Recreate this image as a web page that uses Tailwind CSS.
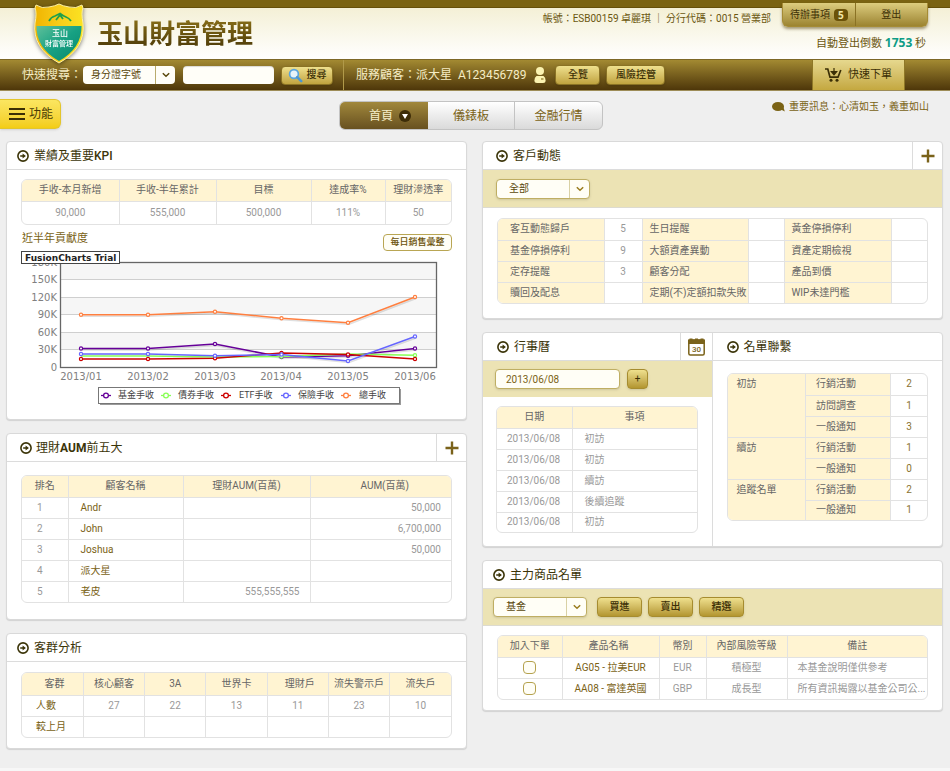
<!DOCTYPE html>
<html lang="zh-Hant">
<head>
<meta charset="utf-8">
<meta name="viewport" content="width=device-width, initial-scale=1">
<title>玉山財富管理</title>
<script src="https://cdn.jsdelivr.net/npm/@tailwindcss/browser@4"></script>
</head>
<body class="bg-[#f7f7f7] font-['Roboto','Noto_Sans_CJK_TC',sans-serif] text-[10px] leading-4 text-[#666]">

<svg class="hidden" aria-hidden="true">
  <symbol id="go" viewBox="0 0 12 12">
    <circle cx="6" cy="6" r="5.1" fill="none" stroke="#3b3408" stroke-width="1.6"/>
    <path d="M3.2 5.3H5.6V3.6L8.9 6L5.6 8.4V6.7H3.2Z" fill="#3b3408"/>
  </symbol>
  <symbol id="plus" viewBox="0 0 14 14">
    <path d="M7 0.5V13.5M0.5 7H13.5" stroke="#7a621a" stroke-width="2.4" fill="none"/>
  </symbol>
  <symbol id="chev" viewBox="0 0 8 6">
    <path d="M0.8 1.2L4 4.3L7.2 1.2" stroke="currentColor" stroke-width="1.5" fill="none"/>
  </symbol>
</svg>

<header class="relative">
  <div class="h-2 border-b border-[#655009] bg-[#7a6312]"></div>
  <div class="flex h-[51px] items-center bg-linear-to-b from-[#f4f0d6] to-white pl-[97px]">
    <h1 class="bg-linear-to-b from-[#8a7018] to-[#4a3808] bg-clip-text text-[26px] leading-8 font-bold text-transparent">玉山財富管理</h1>
    <div class="ml-auto flex self-stretch">
      <p class="mr-[11px] pt-[3px] text-[#6b5710]">帳號：ESB00159 卓麗琪 ｜ 分行代碼：0015 營業部</p>
      <div class="mr-6 flex w-[144px] items-end justify-end pb-[7px] text-[11px] text-[#6b5710]">
        <p>自動登出倒數 <b class="font-['Open_Sans'] text-xs leading-4 text-[#0d9c86]">1753</b> 秒</p>
      </div>
    </div>
  </div>

  <div class="absolute top-[3px] right-[22px] flex h-6 w-[146px] rounded-b-md border border-t-0 border-[#a58b35] bg-linear-to-b from-[#ddcd7e] to-[#9c8430] text-[#3b2f05] shadow-[0_2px_3px_rgba(80,60,0,0.5)]">
    <a href="#" class="flex flex-1 items-center justify-center gap-1 border-r border-[#8a7224]">待辦事項<span class="rounded bg-[#6b5208] px-1 font-['Open_Sans'] text-[10px] leading-3 font-bold text-[#f3e7a8]">5</span></a>
    <a href="#" class="flex flex-1 items-center justify-center">登出</a>
  </div>

  <svg class="absolute top-[3px] left-[33px] drop-shadow-[0_1px_2px_rgba(0,0,0,0.5)]" width="52" height="61" viewBox="0 0 52 61" role="img" aria-label="玉山財富管理">
    <defs>
      <linearGradient id="gold" x1="0" x2="1" y1="0" y2="0"><stop offset="0" stop-color="#f0b400"/><stop offset=".55" stop-color="#f8cf1c"/><stop offset="1" stop-color="#fbe321"/></linearGradient>
      <linearGradient id="jade" x1="0" x2="1" y1="0" y2="1"><stop offset="0" stop-color="#5ec09a"/><stop offset=".5" stop-color="#17a183"/><stop offset="1" stop-color="#07866b"/></linearGradient>
    </defs>
    <path d="M3 2Q9 6 16 4Q22 3 26 1Q30 3 36 4Q43 6 49 2L50 5Q48 10 50 20Q53 45 26 60Q-1 45 2 20Q4 10 2 5Z" fill="url(#gold)" stroke="#fdf0a0" stroke-width="1"/>
    <path d="M3.500 23H48.500Q49 45 26 58Q3 45 3.500 23Z" fill="url(#jade)"/>
    <path d="M16 18Q18 14 22 13L27 10.500Q30 13 33 14Q36 15 38 18M23 17L27 12L30 16" fill="none" stroke="#1fa04a" stroke-width="1.800"/>
    <text x="27" y="33" text-anchor="middle" font-size="8" font-weight="500" fill="#fff" font-family="Noto Sans CJK TC, sans-serif">玉山</text>
    <text x="26" y="43" text-anchor="middle" font-size="7" font-weight="500" fill="#fff" font-family="Noto Sans CJK TC, sans-serif">財富管理</text>
  </svg>

  <div class="flex h-8 items-center border-y border-t-[#7d6828] border-b-[#9d8c58] bg-linear-to-b from-[#a38a32] to-[#4e370a] pl-[22px] text-[#f5ecc4]">
    <label for="idtype" class="w-[61px] text-[12px] whitespace-nowrap">快速搜尋：</label>
    <div class="relative w-[92px]">
      <select id="idtype" class="block h-[18px] w-full appearance-none rounded border-0 bg-[#fffef8] pl-2 text-[10px] leading-[18px] text-[#5a480c]"><option>身分證字號</option></select>
      <span class="pointer-events-none absolute inset-y-0 right-0 flex w-5 items-center justify-center border-l border-[#b9ab6d] text-[#5a480c]"><svg class="h-1.5 w-2"><use href="#chev"/></svg></span>
    </div>
    <input type="text" aria-label="快速搜尋" class="ml-2 h-[18px] w-[91px] rounded bg-[#fffef8] px-2 text-[#5a480c] shadow-[inset_0_1px_1px_rgba(0,0,0,0.15)]">
    <button class="ml-[7px] flex h-[19px] w-[52px] items-center justify-center gap-1 rounded border border-[#8a7224] bg-linear-to-b from-[#efe08d] to-[#c0a33e] font-medium text-[#3b2f05] shadow-sm">
      <svg width="15" height="15" viewBox="0 0 15 15"><circle cx="6" cy="6" r="4.400" fill="#e6f3f8" stroke="#58a4df" stroke-width="1.700"/><path d="M9.200 9.200L13.200 13.200" stroke="#4c97d3" stroke-width="2.600" stroke-linecap="round"/></svg>搜尋</button>
    <div class="ml-2.5 h-full border-l border-[#b19a4a] pl-3"></div>
    <p class="text-[12px] whitespace-pre">服務顧客：派大星  A123456789</p>
    <svg class="ml-2 shrink-0" width="12" height="18" viewBox="0 0 12 18"><circle cx="6" cy="5" r="4" fill="#fbf3b0"/><path d="M2.500 10H9.500Q11.600 11 11.600 14.500Q11.600 17 9 17H3Q0.400 17 0.400 14.500Q0.400 11 2.500 10Z" fill="#fbf3b0"/><path d="M7 13H9.500" stroke="#8a7224" stroke-width="1.200"/></svg>
    <button class="ml-[9px] h-5 w-[45px] rounded border border-[#8a7224] bg-linear-to-b from-[#efe08d] to-[#c0a33e] font-medium text-[#3b2f05] shadow-sm">全覽</button>
    <button class="ml-1.5 h-5 w-[59px] rounded border border-[#8a7224] bg-linear-to-b from-[#efe08d] to-[#c0a33e] font-medium text-[#3b2f05] shadow-sm">風險控管</button>
    <a href="#" class="mr-[45px] ml-auto flex h-full w-[93px] items-center justify-center gap-1.5 border-x border-[#8f7827] bg-linear-to-b from-[#e6d88e] to-[#c4a83f] text-[11px] text-[#3b2f05]">
      <svg width="17" height="14" viewBox="0 0 17 14"><path d="M0 1H2.800L5 9.200H13L15.800 2" fill="none" stroke="#3b2f05" stroke-width="1.700"/><path d="M9 0V4M6.300 3.500H11.700L9 6.800Z" fill="#3b2f05" stroke="#3b2f05" stroke-width="1.200"/><circle cx="6" cy="12.300" r="1.500" fill="#3b2f05"/><circle cx="12" cy="12.300" r="1.500" fill="#3b2f05"/></svg>快速下單</a>
  </div>
</header>

<main class="bg-[#efefef] pb-[19px]">
  <div class="grid h-[50px] grid-cols-[1fr_auto_1fr] items-start pr-2">
    <button class="mt-2 flex h-[30px] w-[61px] items-center gap-1 rounded-r-md border border-l-0 border-[#e3c52c] bg-linear-to-b from-[#fbe660] to-[#f3cd12] pl-[9px] text-[12px] text-[#4a3b05] shadow">
      <svg width="16" height="14" viewBox="0 0 16 14"><path d="M0 2H16M0 7H16M0 12H16" stroke="#3b2f05" stroke-width="2"/></svg>功能</button>
    <nav class="mt-[10px] flex h-[29px] overflow-hidden rounded-md border border-[#c3c3c3] bg-linear-to-b from-white to-[#dadada] text-[12px] text-[#7a6215]">
      <a href="#" class="flex w-[88px] items-center justify-center gap-1.5 bg-linear-to-b from-[#a1883c] to-[#685120] pl-3 text-[#f6eec9]">首頁<svg width="12" height="12" viewBox="0 0 12 12"><circle cx="6" cy="6" r="6" fill="#3d2d08"/><path d="M3 4H9L6 9Z" fill="#fff"/></svg></a>
      <a href="#" class="flex w-[87px] items-center justify-center border-r border-[#c3c3c3]">儀錶板</a>
      <a href="#" class="flex w-[87px] items-center justify-center">金融行情</a>
    </nav>
    <p class="mt-2 mr-[13px] flex items-center gap-1 justify-self-end text-[#7a6215]">
      <svg width="13" height="10" viewBox="0 0 13 10"><ellipse cx="6" cy="4.500" rx="6" ry="4.500" fill="#7a6215"/><path d="M8 7L12.800 9.600L11 4Z" fill="#7a6215"/></svg>重要訊息：心清如玉，義重如山</p>
  </div>

  <div class="grid grid-cols-2 items-start gap-[15px] pr-[7px] pl-1.5">
    <div class="flex min-w-0 flex-col gap-[13px]">

      <section class="rounded border border-[#d9d9d9] bg-white shadow-[0_1px_1px_rgba(0,0,0,0.12)]">
        <h2 class="flex h-7 items-center gap-[5px] border-b border-[#dcdcdc] pl-2.5 text-[12px] text-[#3b3408]"><svg class="size-3"><use href="#go"/></svg><span>業績及重要<span class="font-medium">KPI</span></span></h2>
        <div class="px-3.5 pt-[9px] pb-3.5">
          <div class="overflow-hidden rounded-md border border-[#e2e2e2]">
            <table class="w-full table-fixed text-center text-[#999] [&_tr>*+*]:border-l [&_tr>*+*]:border-[#e2e2e2]">
              <colgroup><col class="w-[97px]"><col class="w-[97px]"><col class="w-[95px]"><col class="w-[74px]"><col></colgroup>
              <thead><tr class="h-[21px] border-b border-[#e2e2e2] bg-[#fff4d2] text-[#666]"><th class="font-normal">手收-本月新增</th><th class="font-normal">手收-半年累計</th><th class="font-normal">目標</th><th class="font-normal">達成率%</th><th class="font-normal">理財滲透率</th></tr></thead>
              <tbody><tr class="h-[23px]"><td>90,000</td><td>555,000</td><td>500,000</td><td>111%</td><td>50</td></tr></tbody>
            </table>
          </div>
          <div class="flex h-[26px] items-end justify-between">
            <h3 class="pb-1 pl-px text-[11px] text-[#7a6215]">近半年貢獻度</h3>
            <button class="h-[17px] w-[69px] rounded border border-[#b9a654] bg-[#fffef6] text-[9px] leading-none font-medium text-[#6b5208]">每日銷售彙整</button>
          </div>
          <svg class="block w-full" viewBox="21 251 431 154" font-family="DejaVu Sans, sans-serif" font-size="10" fill="#808080">
            <path d="M60 262H436V279.500H60ZM60 297H436V314.500H60ZM60 332H436V349.500H60Z" fill="#f6f6f6"/>
            <path d="M60 279.500H436M60 297.500H436M60 314.500H436M60 332.500H436M60 349.500H436" stroke="#cfcfcf"/>
            <rect x="60.500" y="262.500" width="376" height="105" fill="none" stroke="#666" stroke-width="1.300"/>
            <g text-anchor="end"><text x="57" y="266">180K</text><text x="57" y="283">150K</text><text x="57" y="301">120K</text><text x="57" y="318">90K</text><text x="57" y="336">60K</text><text x="57" y="353">30K</text><text x="57" y="371">0</text></g>
            <g text-anchor="middle"><text x="81" y="380">2013/01</text><text x="148" y="380">2013/02</text><text x="215" y="380">2013/03</text><text x="281" y="380">2013/04</text><text x="348" y="380">2013/05</text><text x="415" y="380">2013/06</text></g>
            <g fill="none" stroke="#000" stroke-opacity=".12" stroke-width="1.600" transform="translate(1 1.500)">
              <path d="M81 314.700H148L215 311.700L281.500 318.300L348 322.700L415 297"/><path d="M81 348.500H148L215 344L281.500 357L348 355.700L415 348.500"/><path d="M281.500 354.500L348 361L415 336.500"/>
            </g>
            <g fill="none" stroke-width="1.500">
              <path d="M81 348.500H148L215 344L281.500 357L348 355.700L415 348.500" stroke="#660099"/>
              <path d="M81 356H148L215 357L281.500 356.500L348 354L415 355.300" stroke="#88ff55"/>
              <path d="M81 359H148L215 358.300L281.500 353L348 354.500L415 359" stroke="#cc0000"/>
              <path d="M81 354H148L215 355.700L281.500 354.500L348 361L415 336.500" stroke="#6666ff"/>
              <path d="M81 314.700H148L215 311.700L281.500 318.300L348 322.700L415 297" stroke="#ff7f3f"/>
            </g>
            <g fill="#fff" stroke-width="1.200">
              <g stroke="#660099"><circle cx="81" cy="348.500" r="1.600"/><circle cx="148" cy="348.500" r="1.600"/><circle cx="215" cy="344" r="1.600"/><circle cx="281.500" cy="357" r="1.600"/><circle cx="348" cy="355.700" r="1.600"/><circle cx="415" cy="348.500" r="1.600"/></g>
              <g stroke="#88ff55"><circle cx="415" cy="355.300" r="1.600"/><circle cx="281.500" cy="356.500" r="1.600"/></g>
              <g stroke="#cc0000"><circle cx="81" cy="359" r="1.600"/><circle cx="148" cy="359" r="1.600"/><circle cx="215" cy="358.300" r="1.600"/><circle cx="281.500" cy="353" r="1.600"/><circle cx="348" cy="354.500" r="1.600"/><circle cx="415" cy="359" r="1.600"/></g>
              <g stroke="#6666ff"><circle cx="81" cy="354" r="1.600"/><circle cx="148" cy="354" r="1.600"/><circle cx="215" cy="355.700" r="1.600"/><circle cx="281.500" cy="354.500" r="1.600"/><circle cx="348" cy="361" r="1.600"/><circle cx="415" cy="336.500" r="1.600"/></g>
              <g stroke="#ff7f3f"><circle cx="81" cy="314.700" r="1.600"/><circle cx="148" cy="314.700" r="1.600"/><circle cx="215" cy="311.700" r="1.600"/><circle cx="281.500" cy="318.300" r="1.600"/><circle cx="348" cy="322.700" r="1.600"/><circle cx="415" cy="297" r="1.600"/></g>
            </g>
            <rect x="100" y="389" width="301" height="16" fill="#9a9a9a"/>
            <rect x="98.500" y="387.500" width="301" height="16" fill="#fff" stroke="#777"/>
            <g fill="#fff" stroke-width="1.300">
              <g stroke="#660099"><path d="M101 395.500H111"/><circle cx="106" cy="395.500" r="2.400"/></g>
              <g stroke="#88ff55"><path d="M161 395.500H171"/><circle cx="166" cy="395.500" r="2.400"/></g>
              <g stroke="#cc0000"><path d="M221 395.500H231"/><circle cx="226" cy="395.500" r="2.400"/></g>
              <g stroke="#6666ff"><path d="M281 395.500H291"/><circle cx="286" cy="395.500" r="2.400"/></g>
              <g stroke="#ff7f3f"><path d="M341 395.500H351"/><circle cx="346" cy="395.500" r="2.400"/></g>
            </g>
            <g font-family="Roboto, Noto Sans CJK TC, sans-serif" font-size="9" fill="#444"><text x="118" y="398">基金手收</text><text x="178" y="398">債券手收</text><text x="239" y="398">ETF手收</text><text x="298" y="398">保險手收</text><text x="359" y="398">總手收</text></g>
            <rect x="21.500" y="251.500" width="98" height="12" fill="#fff" stroke="#444"/>
            <text x="25" y="261" font-size="9" font-weight="700" fill="#222">FusionCharts Trial</text>
          </svg>
        </div>
      </section>

      <section class="rounded border border-[#d9d9d9] bg-white shadow-[0_1px_1px_rgba(0,0,0,0.12)]">
        <div class="flex h-7 items-stretch border-b border-[#dcdcdc]">
          <h2 class="flex flex-1 items-center gap-1 pl-[13px] text-[12px] text-[#3b3408]"><svg class="size-3"><use href="#go"/></svg><span>理財<b>AUM</b>前五大</span></h2>
          <button aria-label="展開理財AUM" class="flex w-[30px] items-center justify-center border-l border-[#dcdcdc]"><svg class="size-3.5"><use href="#plus"/></svg></button>
        </div>
        <div class="px-3.5 pt-[13px] pb-4">
          <div class="overflow-hidden rounded-md border border-[#e2e2e2]">
            <table class="w-full table-fixed text-[#999] [&_tr>*+*]:border-l [&_tr>*+*]:border-[#e2e2e2] [&_tr+tr]:border-t [&_tr+tr]:border-[#e2e2e2] [&_td:nth-child(1)]:pr-2.5 [&_td:nth-child(1)]:text-center [&_td:nth-child(2)]:pl-3 [&_td:nth-child(2)]:text-[#7a6215] [&_td:nth-child(n+3)]:pr-2.5 [&_td:nth-child(n+3)]:text-right">
              <colgroup><col class="w-[46px]"><col class="w-[115px]"><col class="w-[127px]"><col></colgroup>
              <thead><tr class="h-[21px] border-b border-[#e2e2e2] bg-[#fff4d2] text-[#666]"><th class="font-normal">排名</th><th class="font-normal">顧客名稱</th><th class="font-normal">理財AUM(百萬)</th><th class="pl-2 font-normal">AUM(百萬)</th></tr></thead>
              <tbody>
                <tr class="h-[21px]"><td>1</td><td><a href="#">Andr</a></td><td></td><td>50,000</td></tr>
                <tr class="h-[21px]"><td>2</td><td><a href="#">John</a></td><td></td><td>6,700,000</td></tr>
                <tr class="h-[21px]"><td>3</td><td><a href="#">Joshua</a></td><td></td><td>50,000</td></tr>
                <tr class="h-[21px]"><td>4</td><td><a href="#">派大星</a></td><td></td><td></td></tr>
                <tr class="h-[21px]"><td>5</td><td><a href="#">老皮</a></td><td>555,555,555</td><td></td></tr>
              </tbody>
            </table>
          </div>
        </div>
      </section>

      <section class="rounded border border-[#d9d9d9] bg-white shadow-[0_1px_1px_rgba(0,0,0,0.12)]">
        <h2 class="flex h-7 items-center gap-[5px] border-b border-[#dcdcdc] pl-2.5 text-[12px] text-[#3b3408]"><svg class="size-3"><use href="#go"/></svg>客群分析</h2>
        <div class="px-3.5 pt-2.5 pb-2.5">
          <div class="overflow-hidden rounded-md border border-[#e2e2e2]">
            <table class="w-full table-fixed text-center text-[#999] [&_tr>*+*]:border-l [&_tr>*+*]:border-[#e2e2e2] [&_tr+tr]:border-t [&_tr+tr]:border-[#e2e2e2]">
              <thead><tr class="h-[22px] border-b border-[#e2e2e2] bg-[#fff4d2] text-[#666]"><th class="pl-1 font-normal">客群</th><th class="font-normal">核心顧客</th><th class="font-normal">3A</th><th class="font-normal">世界卡</th><th class="pl-1 font-normal">理財戶</th><th class="font-normal whitespace-nowrap">流失警示戶</th><th class="font-normal">流失戶</th></tr></thead>
              <tbody>
                <tr class="h-[21px]"><th class="pl-3.5 text-left font-normal text-[#7a6215]">人數</th><td>27</td><td>22</td><td>13</td><td>11</td><td>23</td><td>10</td></tr>
                <tr class="h-[21px]"><th class="pl-3.5 text-left font-normal text-[#7a6215]">較上月</th><td></td><td></td><td></td><td></td><td></td><td></td></tr>
              </tbody>
            </table>
          </div>
        </div>
      </section>
    </div>

    <div class="flex min-w-0 flex-col gap-[13px]">

      <section class="rounded border border-[#d9d9d9] bg-white shadow-[0_1px_1px_rgba(0,0,0,0.12)]">
        <div class="flex h-7 items-stretch border-b border-[#dcdcdc]">
          <h2 class="flex flex-1 items-center gap-[5px] pl-[13px] text-[12px] text-[#3b3408]"><svg class="size-3"><use href="#go"/></svg>客戶動態</h2>
          <button aria-label="展開客戶動態" class="flex w-[30px] items-center justify-center border-l border-[#dcdcdc]"><svg class="size-3.5"><use href="#plus"/></svg></button>
        </div>
        <div class="flex h-[38px] items-center border-b border-[#dddbd0] bg-[#ece3b4] px-[13px]">
          <div class="relative w-[94px]">
            <select aria-label="客戶動態類別" class="block h-5 w-full appearance-none rounded border border-[#bfae63] bg-[#fffef6] pl-3 text-[10px] leading-[18px] text-[#5a480c] shadow-sm"><option>全部</option></select>
            <span class="pointer-events-none absolute inset-y-px right-px flex w-5 items-center justify-center border-l border-[#d9d1a5] text-[#9a7d20]"><svg class="h-1.5 w-2"><use href="#chev"/></svg></span>
          </div>
        </div>
        <div class="px-3.5 pt-2.5 pb-3.5">
          <div class="overflow-hidden rounded-md border border-[#e2e2e2]">
            <table class="w-full table-fixed text-center text-[#999] [&_tr>*+*]:border-l [&_tr>*+*]:border-[#e2e2e2] [&_tr+tr]:border-t [&_tr+tr]:border-[#e2e2e2] [&_th]:bg-[#fff4d2] [&_th]:text-left [&_th]:font-normal [&_th]:whitespace-nowrap [&_th]:text-[#666] [&_th]:pl-[7px] [&_th:first-child]:pl-3">
              <colgroup><col class="w-[106px]"><col class="w-[38px]"><col class="w-[106px]"><col class="w-[36px]"><col class="w-[107px]"><col></colgroup>
              <tbody>
                <tr class="h-[21px]"><th>客互動態歸戶</th><td>5</td><th>生日提醒</th><td></td><th>黃金停損停利</th><td></td></tr>
                <tr class="h-[21px]"><th>基金停損停利</th><td>9</td><th>大額資產異動</th><td></td><th>資產定期檢視</th><td></td></tr>
                <tr class="h-[21px]"><th>定存提醒</th><td>3</td><th>顧客分配</th><td></td><th>產品到價</th><td></td></tr>
                <tr class="h-[21px]"><th>贖回及配息</th><td></td><th>定期(不)定額扣款失敗</th><td></td><th>WIP未達門檻</th><td></td></tr>
              </tbody>
            </table>
          </div>
        </div>
      </section>

      <section class="grid grid-cols-2 rounded border border-[#d9d9d9] bg-white shadow-[0_1px_1px_rgba(0,0,0,0.12)]">
        <div class="border-r border-[#dcdcdc]">
          <div class="flex h-7 items-stretch border-b border-[#dcdcdc]">
            <h2 class="flex flex-1 items-center gap-[5px] pl-3.5 text-[12px] text-[#3b3408]"><svg class="size-3"><use href="#go"/></svg>行事曆</h2>
            <button aria-label="開啟行事曆" class="flex w-8 items-center justify-center border-l border-[#dcdcdc]">
              <svg width="17" height="18" viewBox="0 0 17 18"><rect x=".8" y="2" width="15.400" height="15" rx="1.500" fill="#fff" stroke="#7a621a" stroke-width="1.500"/><path d="M0 1.500H1.500V0.500H4.500V1.500H7V0.500H10V1.500H12.500V0.500H15.500V1.500H17V6H0Z" fill="#7a621a"/><text x="8.500" y="14" text-anchor="middle" font-size="8" font-weight="500" fill="#7a621a" font-family="Roboto, sans-serif">30</text></svg>
            </button>
          </div>
          <div class="flex h-9 items-center gap-[7px] bg-[#ece3b4] px-3">
            <input type="text" aria-label="日期" value="2013/06/08" class="h-5 w-[125px] rounded border border-[#bfae63] bg-[#fffef6] pl-2.5 text-[10px] text-[#7a6215] shadow-sm">
            <button class="flex h-5 w-[21px] items-center justify-center rounded border border-[#a68c2f] bg-linear-to-b from-[#efe08d] to-[#b3962f] text-[10px] text-[#3b2f05] shadow-sm">+</button>
          </div>
          <div class="pt-[9px] pr-3.5 pb-[13px] pl-[13px]">
            <div class="overflow-hidden rounded-md border border-[#e2e2e2]">
              <table class="w-full table-fixed text-[#999] [&_tr>*+*]:border-l [&_tr>*+*]:border-[#e2e2e2] [&_tr+tr]:border-t [&_tr+tr]:border-[#e2e2e2] [&_td:first-child]:pl-2.5 [&_td:last-child]:pl-3">
                <colgroup><col class="w-[75px]"><col></colgroup>
                <thead><tr class="h-[21px] border-b border-[#e2e2e2] bg-[#fff4d2] text-[#666]"><th class="font-normal">日期</th><th class="font-normal">事項</th></tr></thead>
                <tbody>
                  <tr class="h-[21px]"><td>2013/06/08</td><td>初訪</td></tr>
                  <tr class="h-[21px]"><td>2013/06/08</td><td>初訪</td></tr>
                  <tr class="h-[21px]"><td>2013/06/08</td><td>續訪</td></tr>
                  <tr class="h-[21px]"><td>2013/06/08</td><td>後續追蹤</td></tr>
                  <tr class="h-5"><td>2013/06/08</td><td>初訪</td></tr>
                </tbody>
              </table>
            </div>
          </div>
        </div>
        <div>
          <h2 class="flex h-7 items-center gap-[5px] border-b border-[#dcdcdc] pl-3.5 text-[12px] text-[#3b3408]"><svg class="size-3"><use href="#go"/></svg>名單聯繫</h2>
          <div class="px-3.5 pt-3">
            <div class="overflow-hidden rounded-md border border-[#e2e2e2]">
              <table class="w-full table-fixed text-left [&_td]:border-l [&_td]:border-[#e2e2e2] [&_td]:text-center [&_td]:text-[#8a7330] [&_th]:bg-[#fff4d2] [&_th]:font-normal [&_tr+tr>*]:border-t [&_tr+tr>*]:border-[#e2e2e2]">
                <colgroup><col class="w-[78px]"><col class="w-[85px]"><col></colgroup>
                <tbody>
                  <tr class="h-[21px]"><th rowspan="3" class="pt-0.5 pl-[9px] align-top">初訪</th><th class="border-l border-[#e2e2e2] pl-2.5">行銷活動</th><td>2</td></tr>
                  <tr class="h-[21px]"><th class="border-l border-[#e2e2e2] pl-2.5">訪問調查</th><td>1</td></tr>
                  <tr class="h-[21px]"><th class="border-l border-[#e2e2e2] pl-2.5">一般通知</th><td>3</td></tr>
                  <tr class="h-[21px]"><th rowspan="2" class="pt-0.5 pl-[9px] align-top">續訪</th><th class="border-l border-[#e2e2e2] pl-2.5">行銷活動</th><td>1</td></tr>
                  <tr class="h-[21px]"><th class="border-l border-[#e2e2e2] pl-2.5">一般通知</th><td>0</td></tr>
                  <tr class="h-[21px]"><th rowspan="2" class="pt-0.5 pl-[9px] align-top">追蹤名單</th><th class="border-l border-[#e2e2e2] pl-2.5">行銷活動</th><td>2</td></tr>
                  <tr class="h-5"><th class="border-l border-[#e2e2e2] pl-2.5">一般通知</th><td>1</td></tr>
                </tbody>
              </table>
            </div>
          </div>
        </div>
      </section>

      <section class="rounded border border-[#d9d9d9] bg-white shadow-[0_1px_1px_rgba(0,0,0,0.12)]">
        <h2 class="flex h-7 items-center gap-[5px] border-b border-[#dcdcdc] pl-2.5 text-[12px] text-[#3b3408]"><svg class="size-3"><use href="#go"/></svg>主力商品名單</h2>
        <div class="flex h-[37px] items-center gap-1.5 border-b border-[#dddbd0] bg-[#ece3b4] pl-2.5">
          <div class="relative mr-1 w-[94px]">
            <select aria-label="商品類別" class="block h-5 w-full appearance-none rounded border border-[#bfae63] bg-[#fffef6] pl-3 text-[10px] leading-[18px] text-[#5a480c] shadow-sm"><option>基金</option></select>
            <span class="pointer-events-none absolute inset-y-px right-px flex w-5 items-center justify-center border-l border-[#d9d1a5] text-[#9a7d20]"><svg class="h-1.5 w-2"><use href="#chev"/></svg></span>
          </div>
          <button class="h-5 w-[45px] rounded border border-[#a68c2f] bg-linear-to-b from-[#efe08d] to-[#b3962f] font-medium text-[#3b2f05] shadow-sm">買進</button>
          <button class="h-5 w-[45px] rounded border border-[#a68c2f] bg-linear-to-b from-[#efe08d] to-[#b3962f] font-medium text-[#3b2f05] shadow-sm">賣出</button>
          <button class="h-5 w-[45px] rounded border border-[#a68c2f] bg-linear-to-b from-[#efe08d] to-[#b3962f] font-medium text-[#3b2f05] shadow-sm">精選</button>
        </div>
        <div class="px-3.5 pt-[9px] pb-2.5">
          <div class="overflow-hidden rounded-md border border-[#e2e2e2]">
            <table class="w-full table-fixed text-center text-[#999] [&_tr>*+*]:border-l [&_tr>*+*]:border-[#e2e2e2] [&_tr+tr]:border-t [&_tr+tr]:border-[#e2e2e2]">
              <colgroup><col class="w-[64px]"><col class="w-[97px]"><col class="w-[47px]"><col class="w-[81px]"><col></colgroup>
              <thead><tr class="h-[21px] border-b border-[#e2e2e2] bg-[#fff4d2] text-[#666]"><th class="font-normal">加入下單</th><th class="pr-1 font-normal">產品名稱</th><th class="font-normal">幣別</th><th class="font-normal">內部風險等級</th><th class="font-normal">備註</th></tr></thead>
              <tbody>
                <tr class="h-[21px]"><td><input type="checkbox" aria-label="加入 AG05 - 拉美EUR" class="mx-auto block size-[13px] appearance-none rounded border border-[#b5a24e] bg-[#fffef6]"></td><td><a href="#" class="text-[#7a6215]">AG05 - 拉美EUR</a></td><td>EUR</td><td>積極型</td><td class="pl-2.5 text-left">本基金說明僅供參考</td></tr>
                <tr class="h-[21px]"><td><input type="checkbox" aria-label="加入 AA08 - 富達英國" class="mx-auto block size-[13px] appearance-none rounded border border-[#b5a24e] bg-[#fffef6]"></td><td><a href="#" class="text-[#7a6215]">AA08 - 富達英國</a></td><td>GBP</td><td>成長型</td><td class="truncate pl-2.5 text-left">所有資訊揭露以基金公司公...</td></tr>
              </tbody>
            </table>
          </div>
        </div>
      </section>
    </div>
  </div>
</main>
</body>
</html>
